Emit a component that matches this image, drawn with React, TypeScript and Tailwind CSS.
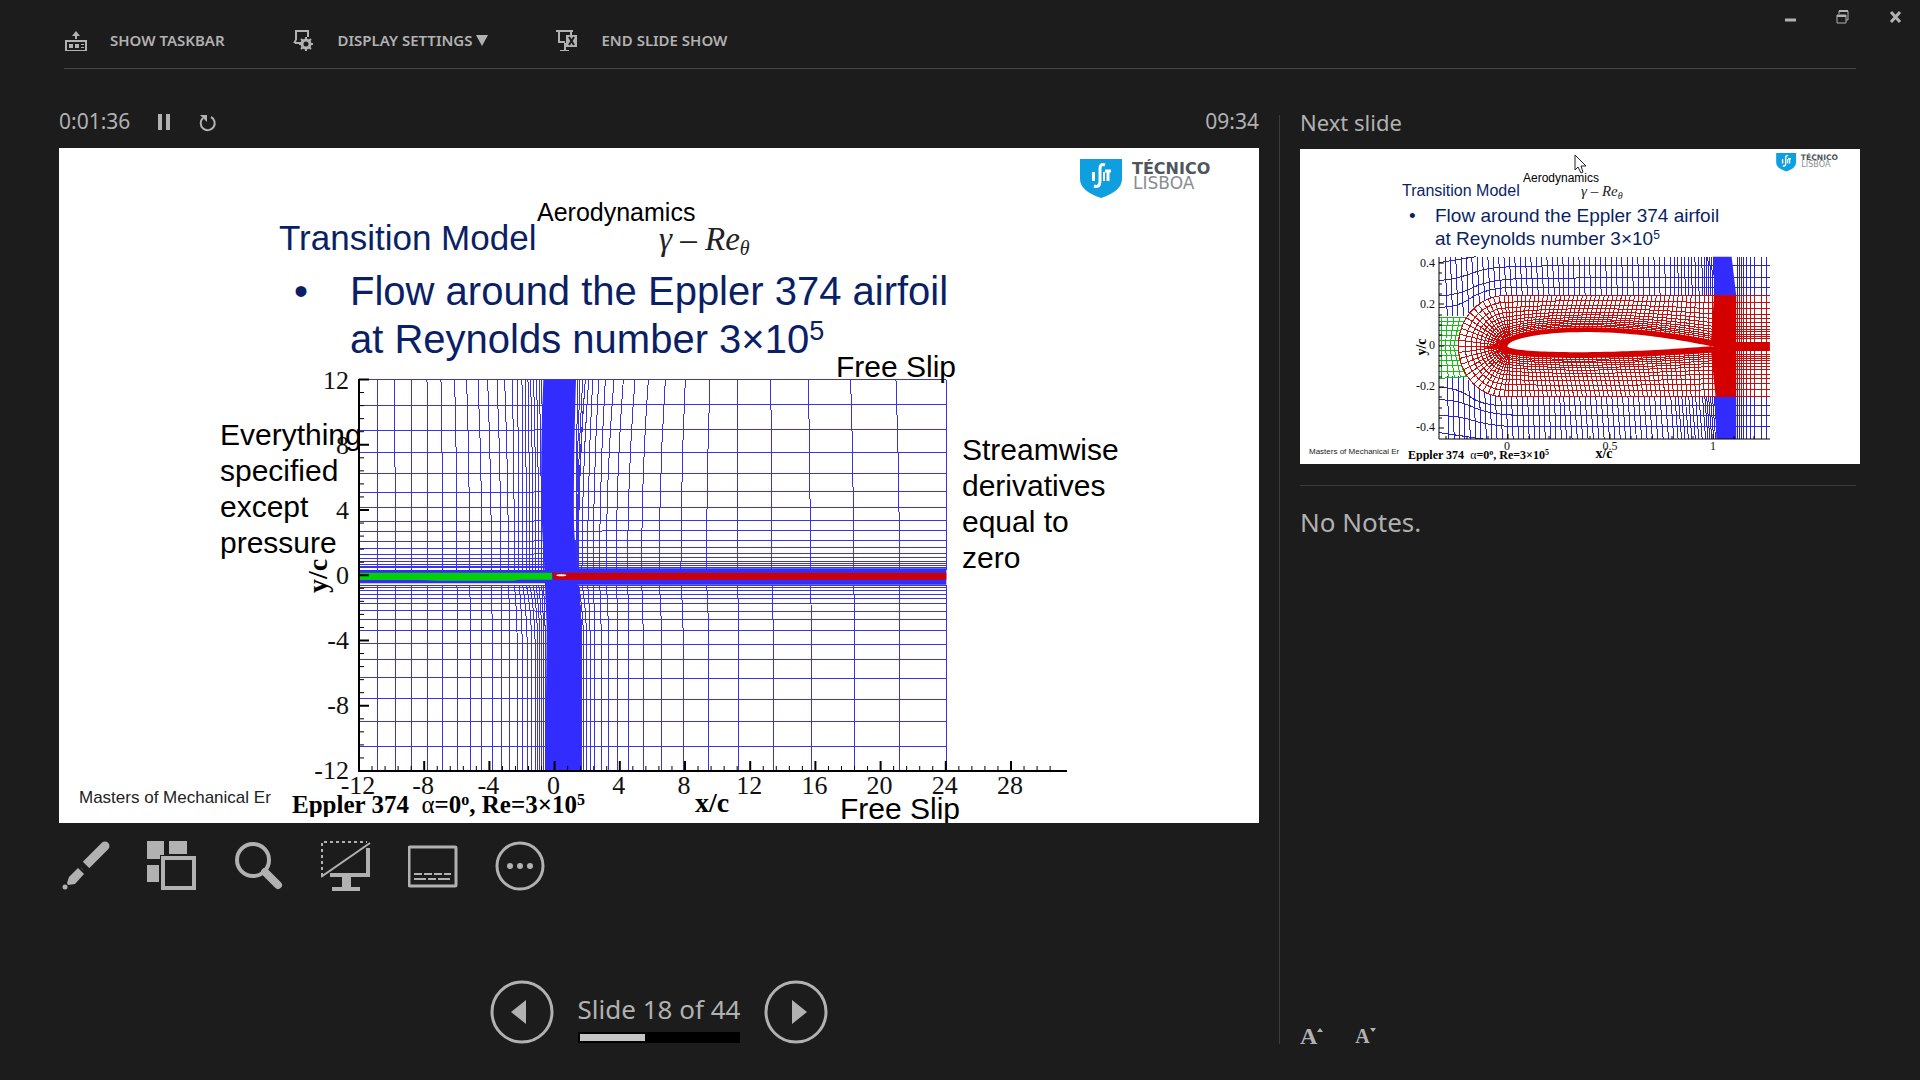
import type { ReactNode } from "react";

// x position of every vertical mesh line at the top, centre and bottom
const columns = [
  [533, 533, 533], [583, 586, 586], [634, 635, 635], [681, 684, 684],
  [723, 728, 729], [764, 771, 772], [800, 809, 812], [834, 846, 846],
  [863, 874, 877], [891, 903, 905], [914, 925, 930], [937, 943, 952],
  [952, 957, 967], [966, 968, 982], [976, 979, 996], [984, 989, 1006],
  [992, 999, 1014], [1001, 1008, 1020], [1010, 1016, 1026], [1018, 1025, 1031],
  [1025, 1030, 1036], [1133, 1128, 1142], [1140, 1129, 1142], [1148, 1131, 1143],
  [1156, 1133, 1146], [1166, 1135, 1152], [1178, 1146, 1161], [1196, 1163, 1171],
  [1216, 1180, 1184], [1242, 1199, 1204], [1270, 1219, 1226], [1305, 1249, 1254],
  [1345, 1283, 1287], [1396, 1325, 1330], [1456, 1378, 1385], [1530, 1443, 1450],
  [1614, 1520, 1526], [1712, 1612, 1617], [1825, 1716, 1720], [1952, 1831, 1835],
  [2088, 1961, 1965], [2239, 2098, 2098], [2239, 2239, 2239],
];

// the far columns are almost straight, so they get their own tops
const straightTops: Record<number, number> = {
  1378: 1396, 1443: 1456, 1520: 1530, 1612: 1614, 1716: 1712, 1831: 1825, 1961: 1952, 2098: 2088,
  1325: 1345, 1283: 1305, 1249: 1270, 1219: 1242, 1199: 1216, 1180: 1196, 1163: 1178, 1146: 1166,
  1135: 1156,
};

// [left y, right y]
const meshRows = [
  [60, 60], [137, 133], [211, 208], [277, 277], [341, 341], [397, 394],
  [442, 442], [484, 481], [516, 513], [544, 541], [566, 562], [583, 580],
  [596, 593], [606, 604], [613, 611], [619, 617], [624, 622],
  [676, 676], [682, 682], [691, 691], [703, 703], [716, 716], [730, 730],
  [752, 755], [780, 780], [811, 811], [850, 853], [899, 899], [953, 955],
  [1015, 1018], [1085, 1085], [1159, 1159],
];

const columnsPath = columns
  .map(([top, m, b]) => {
    const t = straightTops[m] ?? top;
    return `M${t} 60Q${m} 340 ${m} 630M${m} 674Q${b} 760 ${b} 900V1233`;
  })
  .join("");
const rowsPath = meshRows
  .map(([l, r]) => `M476 ${l}H900L1210 ${r}H2239`)
  .join("");

const steps = (n: number) => Array.from({ length: n }, (_, i) => i);

function MainChart() {
  const unit = 195.6 / 12;
  return (
    <svg viewBox="0 0 1200 675" className="absolute inset-0 h-full w-full" aria-label="Computational mesh">
      <g transform="translate(141 212) scale(.33333)" fill="none">
        <g stroke="#3a33e8" strokeWidth="1" shapeRendering="crispEdges">
          <path d={columnsPath} vectorEffect="non-scaling-stroke" />
          <path d={rowsPath} vectorEffect="non-scaling-stroke" />
        </g>
        <path d="M1030 60H1128Q1120 330 1122 500L1130 625L1134 680L1142 800V1233H1036L1040 800L1032 600Q1016 400 1030 60Z" fill="#322cff" />
        <path d="M476 630H1040L1130 625H2239V674H1130L1040 670H476Z" fill="#322cff" />
        <path d="M476 638H1056V659H960L940 662H710L660 660H476Z" fill="#05cf05" />
        <path d="M1056 638H2239V659H1062Z" fill="#cb0007" />
        <ellipse cx="1084" cy="646" rx="15" ry="3" fill="#fff" />
      </g>
      <g stroke="#000" fill="none">
        <path d="M300 231V623H1008" strokeWidth="2" />
        {steps(54).map((i) => (
          <path
            key={i}
            d={`M${300 + i * unit * 0.8} 623v${i % 5 ? -5 : -10}`}
            strokeWidth={i % 5 ? 1 : 2}
          />
        ))}
        {steps(31).map((i) => (
          <path
            key={i}
            d={`M300 ${623 - i * 13.05}h${i % 5 ? 5 : 10}`}
            strokeWidth={i % 5 ? 1 : 2}
          />
        ))}
      </g>
      <g fontFamily="Liberation Serif, serif" fontSize="26" fill="#111">
        {[12, 8, 4, 0, -4, -8, -12].map((n, i) => (
          <text key={n} x="290" y={241 + i * 65} textAnchor="end">{n}</text>
        ))}
        {[-12, -8, -4, 0, 4, 8, 12, 16, 20, 24, 28].map((n, i) => (
          <text key={n} x={299 + i * 65.2} y="646" textAnchor="middle">{n}</text>
        ))}
      </g>
      <g fontFamily="Liberation Serif, serif" fontWeight="bold" fontSize="28">
        <text x="653" y="664" textAnchor="middle">x/c</text>
        <text transform="translate(268 428) rotate(-90)" textAnchor="middle">y/c</text>
      </g>
    </svg>
  );
}

// --- airfoil close-up -----------------------------------------------------

type Point = [number, number];

function lerp(a: Point, b: Point, f: number): Point {
  return [a[0] + (b[0] - a[0]) * f, a[1] + (b[1] - a[1]) * f];
}

// surface of the section, s from 0 (nose) to 1 (tail)
function surface(s: number, upper: boolean): Point {
  const shape = 1.77 * (Math.sqrt(s) - s) + 0.55 * s * (1 - s) * (upper ? 2.6 : 1.5);
  return [568 + 537 * s, upper ? 290 - 58 * shape : 288 + 30 * shape];
}

function buildPairs(): [Point, Point][] {
  const pairs: [Point, Point][] = [];
  const n = 48;
  for (let i = n; i >= 1; i--) {
    const s = i / n;
    pairs.push([surface(Math.pow(s, 1.15), true), [560 + 545 * s, 137]]);
  }
  for (let i = 0; i <= 26; i++) {
    const a = (Math.PI * i) / 26;
    const up = i < 13;
    const s = Math.pow(Math.abs(13 - i) / 13, 2) * 0.012;
    pairs.push([surface(s, up), [560 - 120 * Math.sin(a), 289 - 152 * Math.cos(a)]]);
  }
  for (let i = 1; i <= n; i++) {
    const s = i / n;
    pairs.push([surface(Math.pow(s, 1.15), false), [560 + 545 * s, 441]]);
  }
  return pairs;
}

const pairs = buildPairs();
const toPath = (points: Point[]) =>
  "M" + points.map(([x, y]) => `${x.toFixed(1)} ${y.toFixed(1)}`).join("L");

const spread = [0.16, 0.2, 0.24, 0.29, 0.34, 0.4, 0.47, 0.55, 0.64, 0.74, 0.86, 1];
const normals = pairs.map(([a, b]) => toPath([a, b])).join("");
const shells = spread.map((f) => toPath(pairs.map(([a, b]) => lerp(a, b, f)))).join("");
const airfoil = toPath(pairs.map(([a]) => a)) + "Z";
const layer = toPath(pairs.map(([a, b]) => lerp(a, b, 0.13))) + "Z";

const wakeRows = spread.map((f) => `M1105 ${290 - 153 * f}H1254M1105 ${288 + 153 * f}H1254`).join("");
const wakeColumns = [1170, 1174, 1179, 1185, 1193, 1202, 1213, 1231, 1246];

const outerColumns = [
  ...steps(43).map((i) => 405 + i * 14),
  ...steps(9).map((i) => 1004 + i * 9),
  ...steps(6).map((i) => 1082 + i * 5),
];

// height of the red/blue boundary above a given x
function boundary(x: number) {
  if (x > 560) return 152;
  if (x < 455) return 90;
  return 90 + 62 * Math.sin(((x - 455) / 105) * (Math.PI / 2));
}

const outerPath = outerColumns
  .map((x) => {
    const end = x + (x < 700 ? 6 : 2);
    const h = boundary(end);
    return `M${x} 20L${end} ${289 - h}M${end} ${289 + h}L${x + 10} 567`;
  })
  .join("");

function CloseUpChart() {
  return (
    <svg viewBox="0 0 560 315" className="absolute inset-0 h-full w-full" aria-label="Mesh around the airfoil">
      <g transform="translate(-10 101) scale(.3827 .33333)" fill="none">
        <g stroke="#2a25d0" strokeWidth="1" shapeRendering="crispEdges">
          <path d={outerPath} vectorEffect="non-scaling-stroke" />
          <path
            d="M390 38L485 20M390 92Q440 86 480 68T600 50L720 46H1254M390 137Q440 136 480 112T620 85L880 83H1254M390 172Q440 172 470 146T560 113H1254M560 137H1254
               M390 548L505 567M390 497Q440 497 480 512T600 531H1254M390 449Q440 450 480 472T600 496H1254M390 412Q440 414 470 440T560 467H1254M560 441H1254"
            vectorEffect="non-scaling-stroke"
          />
          {wakeColumns.map((x) => (
            <path key={x} d={`M${x} 20V137M${x} 441V567`} vectorEffect="non-scaling-stroke" />
          ))}
        </g>
        <path d="M1105 20H1154L1166 137H1110ZM1110 441H1166V567H1114Z" fill="#322cff" />
        <path
          d="M390 203H460M390 214H455M390 228H450M390 243H446M390 258H443M390 273H441M390 288H440M390 303H440M390 318H442M390 333H444M390 348H449M390 364H454M390 385L462 380M396 203V385M412 203L406 290L414 385M428 203L418 290L430 385M444 203L428 290L446 383M460 203Q418 290 462 382"
          stroke="#17bd17"
          strokeWidth="1"
          shapeRendering="crispEdges"
          vectorEffect="non-scaling-stroke"
        />
        <g stroke="#c40f0f" strokeWidth="1">
          <path d={normals} vectorEffect="non-scaling-stroke" shapeRendering="crispEdges" />
          <path d={shells} vectorEffect="non-scaling-stroke" shapeRendering="crispEdges" />
          <path d={wakeRows} vectorEffect="non-scaling-stroke" shapeRendering="crispEdges" />
          {wakeColumns.map((x) => (
            <path key={x} d={`M${x} 137V441`} vectorEffect="non-scaling-stroke" shapeRendering="crispEdges" />
          ))}
        </g>
        <path d={layer} fill="#d40000" />
        <path d="M495 291L566 280L580 302Z" fill="#d40000" />
        <path d="M1108 137H1166V276H1254V303H1166V441H1112L1100 300V276Z" fill="#d40000" />
        <path d={airfoil} fill="#fff" />
      </g>
      <g stroke="#000" fill="none">
        <path d="M139 108V290H470" />
        <path d="M139 114h5M139 155h5M139 197h5M139 238h5M139 279h5M208 290v-5M310 290v-5M413 290v-5" />
        <path d="M139 124h3M139 135h3M139 145h3M139 166h3M139 176h3M139 186h3M139 207h3M139 217h3M139 228h3M139 248h3M139 259h3M139 269h3M146 290v-3M167 290v-3M188 290v-3M229 290v-3M249 290v-3M270 290v-3M290 290v-3M331 290v-3M352 290v-3M372 290v-3M393 290v-3M434 290v-3M454 290v-3" />
      </g>
      <g fontFamily="Liberation Serif, serif" fontSize="12" fill="#111">
        {["0.4", "0.2", "0", "-0.2", "-0.4"].map((n, i) => (
          <text key={n} x="135" y={118 + i * 41} textAnchor="end">{n}</text>
        ))}
        {["0", "0.5", "1"].map((n, i) => (
          <text key={n} x={207 + i * 103} y="301" textAnchor="middle">{n}</text>
        ))}
      </g>
      <g fontFamily="Liberation Serif, serif" fontWeight="bold" fontSize="14">
        <text x="304" y="309" textAnchor="middle">x/c</text>
        <text transform="translate(126 198) rotate(-90)" textAnchor="middle">y/c</text>
      </g>
    </svg>
  );
}

function TecnicoLogo({ className }: { className: string }) {
  return (
    <svg viewBox="0 0 134 40" className={className} aria-label="Técnico Lisboa">
      <path d="M0 0H42V20Q42 32 21 39Q0 32 0 20Z" fill="#0f9fe0" />
      <g fill="none" stroke="#fff" strokeWidth="3">
        <path d="M13.500 13V22" />
        <path d="M25 6Q20 4 20 10V22Q20 29 14 27" />
        <path d="M25 12H31M28 12V22" />
        <path d="M24 13V22" strokeWidth="2" />
      </g>
      <g fontFamily="DejaVu Sans, sans-serif" fill="#4d565c">
        <text x="52" y="15" fontSize="16" fontWeight="bold">TÉCNICO</text>
        <text x="53" y="30" fontSize="17" fill="#878d91">LISBOA</text>
      </g>
    </svg>
  );
}

function ToolIcon({ size = 50, children }: { size?: number; children: ReactNode }) {
  return (
    <svg width={size} height={size} viewBox={`0 0 ${size} ${size}`} fill="none" stroke="currentColor" aria-hidden="true">
      {children}
    </svg>
  );
}

const tools = [
  {
    label: "Pen and laser pointer tools",
    icon: (
      <>
        <path d="M45 5L25 25" strokeWidth="9" strokeLinecap="round" />
        <path d="M20 22L29 31" stroke="#1c1c1c" strokeWidth="6" />
        <g fill="currentColor" stroke="none">
          <path d="M18 27L24 33L15 43L8 44L7 42L9 36Z" />
          <circle cx="5" cy="46" r="2.500" />
        </g>
      </>
    ),
  },
  {
    label: "See all slides",
    icon: (
      <>
        <path d="M0 0H17V14H13V18H0ZM22 0H40V13H22ZM0 24H12V41H0Z" fill="currentColor" stroke="none" />
        <path d="M16 17H47V47H16Z" strokeWidth="4" />
      </>
    ),
  },
  {
    label: "Zoom into the slide",
    icon: (
      <>
        <circle cx="19" cy="19" r="16" strokeWidth="4" />
        <path d="M31 31L44 44" strokeWidth="8" strokeLinecap="round" />
      </>
    ),
  },
  {
    label: "Black or unblack slide show",
    icon: (
      <>
        <path d="M1 35V1H46" strokeWidth="2" strokeDasharray="3 3" />
        <path d="M0 36L49 2" strokeWidth="2" />
        <path d="M47 7V34H9" strokeWidth="4" />
        <path d="M21 34H30V46H39V50H11V46H21Z" fill="currentColor" stroke="none" />
      </>
    ),
  },
  {
    label: "Toggle subtitles",
    icon: (
      <>
        <rect x="1" y="6" width="47" height="39" rx="1" strokeWidth="3" />
        <path d="M6 33H43" strokeWidth="2" strokeDasharray="8 2" />
        <path d="M6 38H43" strokeWidth="2" strokeDasharray="12 2 8 2" />
      </>
    ),
  },
  {
    label: "More slide show options",
    icon: (
      <>
        <circle cx="25" cy="25" r="23" strokeWidth="3" />
        <g fill="currentColor" stroke="none">
          <circle cx="15" cy="25" r="3" />
          <circle cx="25" cy="25" r="3" />
          <circle cx="35" cy="25" r="3" />
        </g>
      </>
    ),
  },
];

function TopBar() {
  return (
    <header>
      <div className="flex h-[68px] justify-between">
        <nav className="flex items-center gap-[68px] pl-[65px] pt-3 text-[15px] font-semibold">
          <button type="button" className="flex items-center gap-[23px]">
            <ToolIcon size={22}>
              <path d="M1 12H21V22H1Z" strokeWidth="2" />
              <path d="M4 15H8V19H4ZM10 15H14V19H10ZM16 15H19V16H16ZM16 18H19V19H16Z" fill="currentColor" stroke="none" />
              <path d="M11 2L15 7H12V10H10V7H7Z" fill="currentColor" stroke="none" />
            </ToolIcon>
            SHOW TASKBAR
          </button>
          <button type="button" className="flex items-center gap-[23px]">
            <ToolIcon size={22}>
              <path d="M3 11V2H15V8M2 14H8M3 11L1 14" strokeWidth="2" />
              <circle cx="13" cy="15" r="4" strokeWidth="3" />
              <path d="M13 8V11M13 19V22M6 15H9M17 15H20M8 10L10 12M16 18L18 20M18 10L16 12M10 18L8 20" strokeWidth="2" />
            </ToolIcon>
            <span className="flex items-center gap-1">
              DISPLAY SETTINGS
              <svg width="12" height="12" viewBox="0 0 12 12" aria-hidden="true">
                <path d="M0 1H12L6 12Z" fill="currentColor" />
              </svg>
            </span>
          </button>
          <button type="button" className="flex items-center gap-[23px]">
            <ToolIcon size={22}>
              <path d="M0 2H17M3 3V13H9M15 3V6" strokeWidth="2" />
              <path d="M4 22H13M9 14V21" strokeWidth="2" />
              <path d="M10 6H21V18H10Z" fill="currentColor" stroke="none" />
              <path d="M13 8L18 16M18 8L13 16" stroke="#1c1c1c" strokeWidth="2" />
            </ToolIcon>
            END SLIDE SHOW
          </button>
        </nav>
        <div className="flex h-[34px] gap-1">
          <button type="button" aria-label="Minimize" className="flex w-12 items-center justify-center">
            <ToolIcon size={16}>
              <path d="M1 11H12" strokeWidth="3" />
            </ToolIcon>
          </button>
          <button type="button" aria-label="Restore" className="flex w-12 items-center justify-center">
            <ToolIcon size={16}>
              <path d="M1 6H10V14H1ZM3 5V2H12V11H10" />
              <path d="M1 7H10M3 2H12" strokeWidth="2" />
            </ToolIcon>
          </button>
          <button type="button" aria-label="Close" className="flex w-12 items-center justify-center">
            <ToolIcon size={16}>
              <path d="M3 3L12 13M12 3L3 13" strokeWidth="3" />
            </ToolIcon>
          </button>
        </div>
      </div>
      <hr className="mx-16 border-[#444]" />
    </header>
  );
}

function CurrentSlide() {
  return (
    <article className="relative aspect-video w-full overflow-hidden bg-white font-['Liberation_Sans',sans-serif] text-black">
      <MainChart />
      <TecnicoLogo className="absolute left-[1021px] top-[11px] h-10 w-[134px]" />
      <p className="absolute left-[478px] top-[50px] text-[25px] leading-7">Aerodynamics</p>
      <h2 className="absolute left-[220px] top-[70px] text-[35px] leading-10 text-[#0b1f66]">Transition Model</h2>
      <p className="absolute left-[600px] top-[71px] font-['Liberation_Serif',serif] text-[33px] italic leading-10 text-[#222]">
        γ – Re<sub className="text-xl">θ</sub>
      </p>
      <ul className="absolute left-[291px] top-[119px] list-none text-[40px] leading-[48px] text-[#0b1f66]">
        <li>
          <span className="absolute -left-[56px]">•</span>
          Flow around the Eppler 374 airfoil
          <br />
          at Reynolds number 3×10<sup className="text-[27px] leading-none">5</sup>
        </li>
      </ul>
      <p className="absolute left-[777px] top-[201px] text-[30px] leading-9">Free Slip</p>
      <p className="absolute left-[161px] top-[269px] text-[30px] leading-9">
        Everything
        <br />
        specified
        <br />
        except
        <br />
        pressure
      </p>
      <p className="absolute left-[903px] top-[284px] text-[30px] leading-9">
        Streamwise
        <br />
        derivatives
        <br />
        equal to
        <br />
        zero
      </p>
      <p className="absolute left-[781px] top-[643px] text-[30px] leading-9">Free Slip</p>
      <p className="absolute left-[20px] top-[640px] text-[17px] leading-5 text-[#222]">Masters of Mechanical Er</p>
      <p className="absolute left-[233px] top-[641px] h-[28px] overflow-hidden whitespace-pre font-['Liberation_Serif',serif] text-[25px] font-bold leading-8">
        Eppler 374{"  "}
        <span className="font-normal">α</span>=0<sup className="text-base leading-none">o</sup>, Re=3×10
        <sup className="text-base leading-none">5</sup>
      </p>
    </article>
  );
}

function NextSlide() {
  return (
    <article className="relative mt-px aspect-video w-full overflow-hidden bg-white font-['Liberation_Sans',sans-serif] text-black">
      <CloseUpChart />
      <TecnicoLogo className="absolute left-[476px] top-[4px] h-[19px] w-[64px]" />
      <p className="absolute left-[223px] top-[21px] text-xs leading-4">Aerodynamics</p>
      <h3 className="absolute left-[102px] top-[32px] text-base leading-5 text-[#0b1f66]">Transition Model</h3>
      <p className="absolute left-[281px] top-[32px] font-['Liberation_Serif',serif] text-[15px] italic leading-5 text-[#222]">
        γ – Re<sub className="text-[10px]">θ</sub>
      </p>
      <ul className="absolute left-[135px] top-[55px] list-none text-[19px] leading-[23px] text-[#0b1f66]">
        <li>
          <span className="absolute -left-[26px]">•</span>
          Flow around the Eppler 374 airfoil
          <br />
          at Reynolds number 3×10<sup className="text-xs leading-none">5</sup>
        </li>
      </ul>
      <p className="absolute left-[9px] top-[297px] text-[8px] leading-3 text-[#222]">Masters of Mechanical Er</p>
      <p className="absolute left-[108px] top-[298px] h-[14px] overflow-hidden whitespace-pre font-['Liberation_Serif',serif] text-xs font-bold leading-4">
        Eppler 374{"  "}
        <span className="font-normal">α</span>=0<sup className="text-[8px] leading-none">o</sup>, Re=3×10
        <sup className="text-[8px] leading-none">5</sup>
      </p>
      <svg viewBox="0 0 13 20" className="absolute left-[274px] top-[5px] h-5 w-[13px]" aria-hidden="true">
        <path d="M1 1V16L4 13L7 19L9 18L7 12H12Z" fill="#fff" stroke="#222" />
      </svg>
    </article>
  );
}

function ArrowButton({ label, path }: { label: string; path: string }) {
  return (
    <button type="button" aria-label={label} className="h-16 w-16">
      <ToolIcon size={64}>
        <circle cx="32" cy="32" r="30" strokeWidth="3" />
        <path d={path} fill="currentColor" stroke="none" />
      </ToolIcon>
    </button>
  );
}

export default function App() {
  const slide = 18;
  const total = 44;

  return (
    <div className="flex min-h-screen flex-col bg-[#1c1c1c] font-['Noto_Sans',sans-serif] text-[#b1b1b1]">
      <TopBar />
      <main className="grid flex-1 grid-cols-[1200fr_1px_560fr] gap-x-5 pb-9 pl-[59px] pr-[60px] pt-[29px]">
        <section className="flex flex-col">
          <div className="flex h-[50px] items-center pb-0.5 text-[21px]">
            <time>0:01:36</time>
            <button type="button" aria-label="Pause timer" className="ml-6">
              <ToolIcon size={20}>
                <path d="M6 2V18M14 2V18" strokeWidth="4" />
              </ToolIcon>
            </button>
            <button type="button" aria-label="Restart timer" className="ml-6">
              <ToolIcon size={20}>
                <path d="M13 5A7 7 0 1 1 5 6" strokeWidth="2" />
                <path d="M2 3H9V10Z" fill="currentColor" stroke="none" />
              </ToolIcon>
            </button>
            <time className="ml-auto">09:34</time>
          </div>
          <CurrentSlide />
          <div className="flex gap-[37px] pl-px pt-[18px]">
            {tools.map((tool) => (
              <button key={tool.label} type="button" aria-label={tool.label}>
                <ToolIcon>{tool.icon}</ToolIcon>
              </button>
            ))}
          </div>
          <div className="mt-auto flex items-center justify-center gap-6">
            <ArrowButton label="Previous slide" path="M21 32L36 20V44Z" />
            <div className="pt-3">
              <p className="text-[26px] leading-8">
                Slide {slide} of {total}
              </p>
              <div className="mt-[7px] h-[11px] bg-black p-0.5">
                <div className="h-full bg-[#c4c4c4]" style={{ width: `${(slide / total) * 100}%` }} />
              </div>
            </div>
            <ArrowButton label="Next slide" path="M43 32L28 20V44Z" />
          </div>
        </section>

        <div className="mt-[17px] bg-[#3c3c3c]" />

        <aside className="flex flex-col">
          <h2 className="flex h-[50px] items-center pb-0.5 text-[22px]">Next slide</h2>
          <NextSlide />
          <hr className="mr-1 mt-[21px] border-[#3c3c3c]" />
          <p className="mt-4 text-[26px] leading-10">No Notes.</p>
          <div className="mt-auto flex items-end gap-8 font-['Liberation_Serif',serif] font-bold">
            <button type="button" aria-label="Increase text size" className="flex items-start text-2xl leading-4">
              A
              <svg width="6" height="4" viewBox="0 0 6 4" aria-hidden="true">
                <path d="M0 4L3 0L6 4Z" fill="currentColor" />
              </svg>
            </button>
            <button type="button" aria-label="Decrease text size" className="flex items-start text-xl leading-4">
              A
              <svg width="6" height="4" viewBox="0 0 6 4" aria-hidden="true">
                <path d="M0 0H6L3 4Z" fill="currentColor" />
              </svg>
            </button>
          </div>
        </aside>
      </main>
    </div>
  );
}
